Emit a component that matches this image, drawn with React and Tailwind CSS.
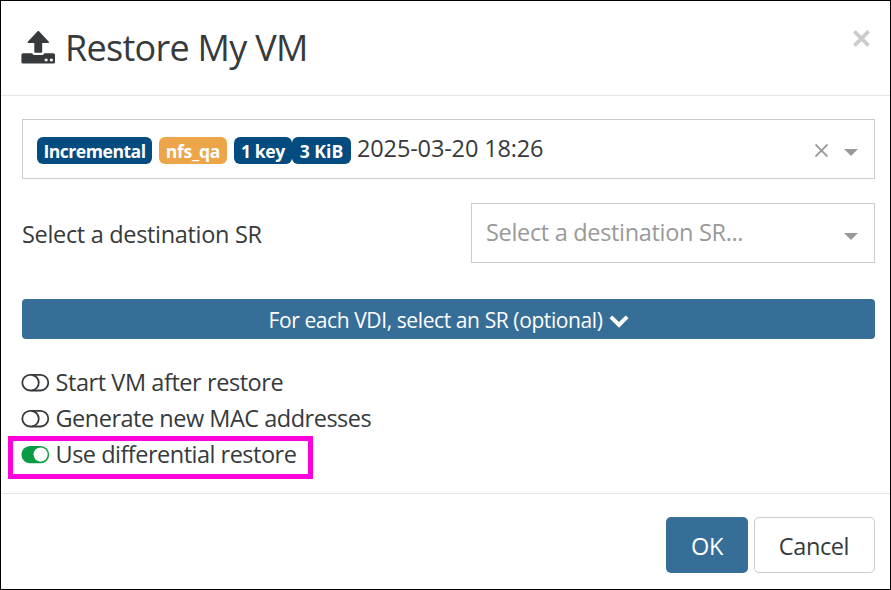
function RestoreIcon() {
  return (
    <svg className="mt-[30px] h-[34px] w-[34px] shrink-0" viewBox="0 0 34 34" fill="#373a3c">
      <path d="M16.6 .2Q17.3-.3 18 .2L27.6 10.6Q28.6 12 27 12H21.2V20.8Q21.2 21.8 20.2 21.8H14.3Q13.3 21.8 13.3 20.8V12H7.5Q6 12 7 10.6Z" />
      <path
        fillRule="evenodd"
        d="M2 22.3H11.2Q11.6 24 13.3 24H21.2Q22.9 24 23.3 22.3H32.4Q34 22.3 34 23.9V30.9Q34 32.5 32.4 32.5H2Q.4 32.5 .4 30.9V23.9Q.4 22.3 2 22.3ZM23.7 27.7V30.3H26.5V27.7ZM29 27.7V30.3H31.8V27.7Z"
      />
    </svg>
  );
}

function ToggleIcon({ on }) {
  return (
    <svg className="-ml-px h-[18px] w-[29px] shrink-0" viewBox="0 0 29 18">
      {on ? (
        <>
          <rect x=".4" y="0" width="27.8" height="17.2" rx="8.6" fill="#0a9b45" />
          <circle cx="19.6" cy="8.6" r="7.1" fill="#fff" />
        </>
      ) : (
        <g fill="none" stroke="#373a3c" strokeWidth="1.8">
          <rect x="1.3" y=".9" width="26" height="15.6" rx="7.8" />
          <path d="M11.2 1A7.8 7.8 0 0 1 11.2 16.4" />
        </g>
      )}
    </svg>
  );
}

function Caret() {
  return (
    <svg className="h-[7px] w-[14px] shrink-0" viewBox="0 0 14 7" fill="#999">
      <path d="M0 0H14L7 7Z" />
    </svg>
  );
}

function Option({ on, label, spacing }) {
  return (
    <div className="flex h-9 items-center">
      <ToggleIcon on={on} />
      <span className={`-mt-[2px] ml-[5.5px] ${spacing}`}>{label}</span>
    </div>
  );
}

export default function App() {
  return (
    <div className="flex h-[590px] w-[891px] flex-col overflow-hidden border border-black bg-white font-['Open_Sans',sans-serif] text-[23.5px] leading-9 whitespace-nowrap text-[#373a3c]">
      <header className="flex h-[95px] shrink-0 border-b border-[#e5e5e5] pl-5">
        <RestoreIcon />
        <h4 className="mt-[20px] ml-[10px] text-[36px] leading-[54px] tracking-[-0.72px]">Restore My VM</h4>
        <svg className="mt-[29px] mr-5 ml-auto h-[17px] w-[17px]" viewBox="0 0 17 17" stroke="#ccc" strokeWidth="3.7">
          <path d="M1.4 1.4 15.6 15.6M15.6 1.4 1.4 15.6" />
        </svg>
      </header>

      <main className="flex h-[398px] shrink-0 flex-col border-b border-[#e5e5e5] pt-[23px] pr-[15px] pl-[21px]">
        <div className="flex h-[60px] shrink-0 items-center border border-[#ccc] pr-4 pl-[14px]">
          <span className="mt-[2px] flex h-[27px] w-[115px] items-center justify-center rounded-md bg-[#044b7f] pt-px text-[17.6px] font-bold tracking-[-0.5px] text-white">Incremental</span>
          <span className="mt-[2px] ml-[7px] flex h-[27px] w-[68px] items-center justify-center rounded-md bg-[#eca649] pt-px text-[17.6px] font-bold tracking-[-0.3px] text-white">nfs_qa</span>
          <span className="mt-[2px] ml-[7px] flex h-[27px] w-[58px] items-center justify-center rounded-md bg-[#044b7f] pt-px text-[17.6px] font-bold tracking-[-0.4px] text-white">1 key</span>
          <span className="mt-[2px] flex h-[27px] w-[59px] items-center justify-center rounded-md bg-[#044b7f] pt-px text-[17.6px] font-bold text-white">3 KiB</span>
          <span className="-mt-[2px] ml-[6px] tracking-[-0.14px]">2025-03-20 18:26</span>
          <svg className="mt-[3px] ml-auto h-[13px] w-[13px]" viewBox="0 0 13 13" stroke="#999" strokeWidth="1.9">
            <path d="M.5 .5 12.5 12.5M12.5 .5 .5 12.5" />
          </svg>
          <div className="mt-[6px] ml-4 flex">
            <Caret />
          </div>
        </div>

        <div className="mt-6 flex h-[60px] shrink-0 items-center">
          <span className="mt-[2px] tracking-[-0.32px]">Select a destination SR</span>
          <div className="ml-auto flex h-[60px] w-[404px] items-center justify-between border border-[#ccc] pr-4 pl-[14px] text-[#999]">
            <span className="-mt-[2px] tracking-[-0.32px]">Select a destination SR...</span>
            <div className="mt-[6px] flex">
              <Caret />
            </div>
          </div>
        </div>

        <button className="mt-9 flex h-10 shrink-0 items-center justify-center rounded-[4px] bg-[#366e98] text-[21px] tracking-[-0.4px] text-white">
          <span className="mt-[2px]">For each VDI, select an SR (optional)</span>
          <svg className="mt-[5px] ml-[6px] h-[13px] w-5" viewBox="0 0 20 13" fill="#fff">
            <path d="M.5 3.2 3.2 .5 10 7.1 16.8 .5 19.5 3.2 10 12.7Z" />
          </svg>
        </button>

        <div className="mt-[26px] flex flex-col">
          <Option label="Start VM after restore" spacing="tracking-[-0.43px]" />
          <Option label="Generate new MAC addresses" spacing="tracking-[-0.49px]" />
          <div className="relative">
            <Option on label="Use differential restore" spacing="tracking-[-0.5px]" />
            <div className="absolute -top-[1px] -left-[14px] h-[43px] w-[305px] border-5 border-[#ff00dc]" />
          </div>
        </div>
      </main>

      <footer className="flex justify-end gap-[6px] pt-[23px] pr-[15px]">
        <button className="h-14 w-[82px] rounded-[5px] bg-[#366e98] pt-[2px] tracking-[-0.3px] text-white">OK</button>
        <button className="h-14 w-[121px] rounded-[5px] border border-[#ccc] bg-white pt-[2px] pr-px tracking-[-0.4px]">Cancel</button>
      </footer>
    </div>
  );
}
